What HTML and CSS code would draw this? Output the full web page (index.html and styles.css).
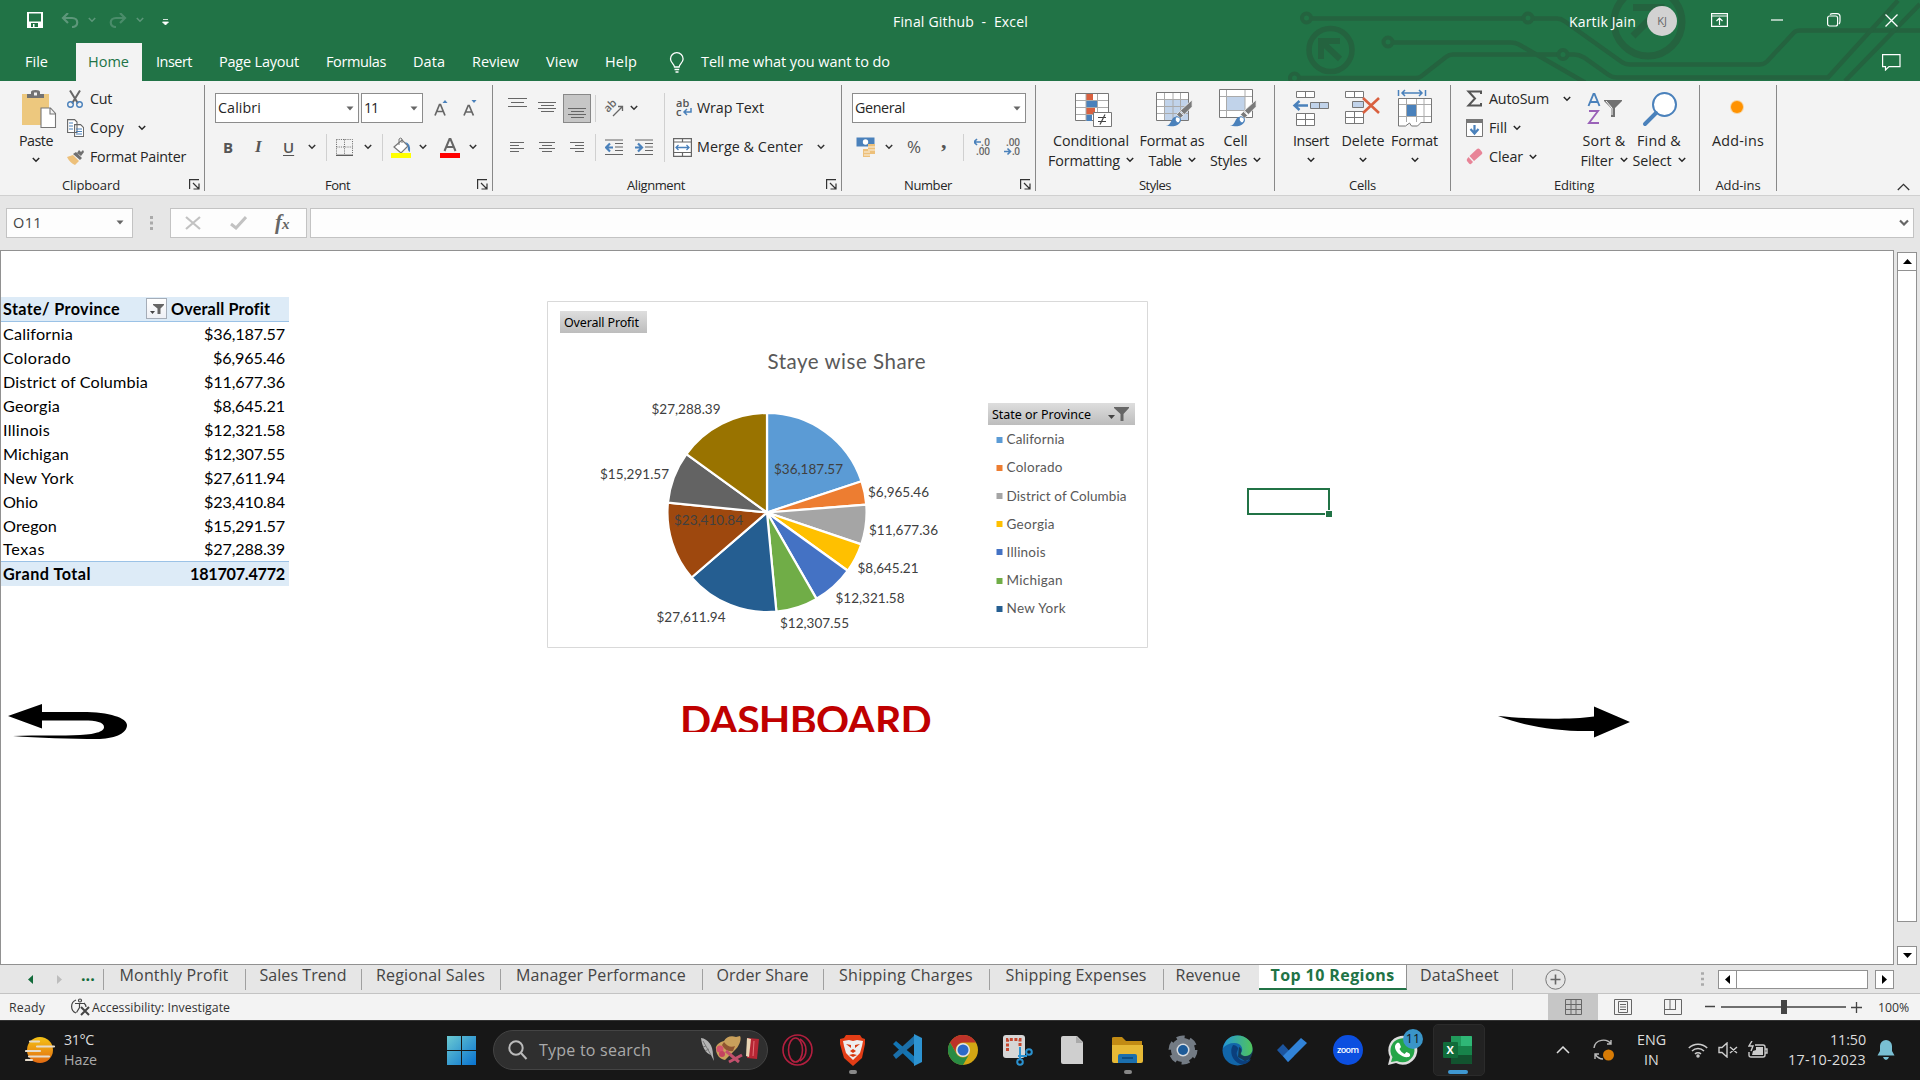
FILE: index.html
```html
<!DOCTYPE html>
<html lang="en">
<head>
<meta charset="utf-8">
<title>Final Github - Excel</title>
<link rel="stylesheet" href="styles.css">
</head>
<body>
<svg class="defs" width="0" height="0">
  <symbol id="chev" viewBox="0 0 8 6"><path d="M.8 1 4 4.2 7.2 1" fill="none" stroke="currentColor" stroke-width="1.5"/></symbol>
  <symbol id="drop" viewBox="0 0 8 5"><path d="M.5.5h7L4 4.5z" fill="#666"/></symbol>
  <symbol id="launch" viewBox="0 0 11 11"><path d="M.6 10V.6H10M4 4l5.5 5.5M10 4.5V10H4.5" fill="none" stroke="#333" stroke-width="1.2"/></symbol>
  <symbol id="brush" viewBox="0 0 30 30"><path d="M28 1v7l-8 8-4-4zM15 13l4 4-3 3-4-4z" fill="#7a7a7a" stroke="#f3f3f3" stroke-width=".8"/><path d="M1 28c6-1 5-10 11-10 4 0 6 4 3 7-3 4-9 3-14 3z" fill="#4a81bb"/><path d="M12 18.500c3 0 5 2 3 5-1 2-3 1-4-1s0-4 1-4z" fill="#fff" stroke="#4a81bb"/></symbol>
  <symbol id="funnel" viewBox="0 0 22 16"><path d="M6 1h15v1l-5.500 6v7h-3V8L6 2z" fill="#666"/><path d="M0 9h7l-3.500 4z" fill="#444"/></symbol>
  <symbol id="funnel-cell" viewBox="0 0 14 12"><path d="M3 1h11v1L10.500 5.500V11h-3V5.500L3 2z" fill="#666"/><path d="M0 8h5l-2.500 3z" fill="#444"/></symbol>
</svg>

<div class="top">
  <svg class="circuit" width="640" height="81" viewBox="1280 0 640 81" fill="none" stroke="#24633f" stroke-width="4.500">
    <circle cx="1306.500" cy="18" r="4.500" stroke-width="4"/><path d="M1311 18.500h212M1533 18.500h24q4 0 8 3l56 40q4 3 9 3h129q5 0 8-3l27-29q2-2 6-2h128"/>
    <circle cx="1528" cy="18" r="4.500" stroke-width="4"/><circle cx="1330.500" cy="50" r="21.500" stroke-width="5.500"/>
    <path d="M1340 41h-19v18M1322 42l18 17" stroke-width="6"/>
    <circle cx="1388" cy="42" r="4.500" stroke-width="4"/><path d="M1393 42.500h118q4 0 8 2l66 38M1299 78h117q4 0 7-3l23-18q3-2.500 7-2.500h106"/>
    <circle cx="1563" cy="54.500" r="4.500" stroke-width="4"/><circle cx="1294.500" cy="78" r="4.500" stroke-width="4"/>
    <path d="M1568 54.500h6q5 0 10 3l24 17q4 3 9 3h211l70-77M1845 81l75-77"/>
    <circle cx="1648" cy="22" r="34" stroke-width="7"/><path d="M1633 7.500h28v14M1660 9l-27 27" stroke-width="7"/>
  </svg>
  <header class="titlebar">
    <svg width="16" height="16" viewBox="0 0 16 16"><path d="M0 0h16v16H0zM2 1.500v8h12v-8zM4 11v4h2v-3h1.500v3H11v-4z" fill="#fff" fill-rule="evenodd"/></svg>
    <svg width="18" height="15" viewBox="0 0 18 15" fill="none" stroke="#5d977a" stroke-width="2.200"><path d="M7 0 2 5l5 5M2 5h9c7 0 7 9 0 9"/></svg>
    <svg class="dim" width="8" height="6"><use href="#chev"/></svg>
    <svg width="18" height="15" viewBox="0 0 18 15" fill="none" stroke="#4a8c6a" stroke-width="2.200"><path d="m11 0 5 5-5 5M16 5H7c-7 0-7 9 0 9"/></svg>
    <svg class="dim" width="8" height="6"><use href="#chev"/></svg>
    <svg class="qat" width="7" height="7" viewBox="0 0 7 7"><path d="M1 .5h5M.5 3h6L3.500 6z" stroke="#fff" fill="#fff" stroke-width=".8"/></svg>
    <span><span data-w="135">Final Github&nbsp; -&nbsp; Excel</span></span>
    <span><span data-w="67">Kartik Jain</span></span>
    <span class="avatar">KJ</span>
    <svg width="17" height="14" viewBox="0 0 17 14" fill="none" stroke="#fff" stroke-width="1.200"><path d="M.6.6h15.800v12.800H.6zM.6 3h15.800M8.500 12V5M5.500 8l3-3 3 3"/></svg>
    <svg width="12" height="2"><path d="M0 1h12" stroke="#fff" stroke-width="1.200"/></svg>
    <svg width="14" height="14" viewBox="0 0 14 14" fill="none" stroke="#fff" stroke-width="1.200"><rect x=".6" y="3" width="10" height="10" rx="2"/><path d="M3 1.500Q4 .6 6 .6h4q3 0 3 3V8q0 2-1 3"/></svg>
    <svg width="13" height="13" viewBox="0 0 13 13"><path d="m.5.500 12 12m0-12-12 12" stroke="#fff" stroke-width="1.300"/></svg>
  </header>
  <nav class="tabs">
    <span><span data-w="23">File</span></span><span class="on"><span data-w="41">Home</span></span><span><span data-w="36">Insert</span></span><span><span data-w="80">Page Layout</span></span><span><span data-w="60">Formulas</span></span><span><span data-w="32">Data</span></span><span><span data-w="47">Review</span></span><span><span data-w="32">View</span></span><span><span data-w="32">Help</span></span>
    <svg width="16" height="21" viewBox="0 0 16 21" fill="none" stroke="#fff" stroke-width="1.300"><path d="M5.500 15c0-3-4-4-4-8a6.300 6.300 0 0 1 12.600 0c0 4-4 5-4 8zM5.500 17.500h4.700M6.500 20h3"/></svg>
    <span><span data-w="189">Tell me what you want to do</span></span>
    <svg width="19" height="17" viewBox="0 0 19 17" fill="none" stroke="#fff" stroke-width="1.200"><path d="M.6.600h17.400v12H7L3.500 16v-3.400H.6z"/></svg>
  </nav>
</div>

<div class="ribbon">
  <section class="group clip">
    <div class="body">
      <div class="big">
        <svg width="36" height="40" viewBox="21 89 36 40"><path d="M22 94h27v31H22z" fill="#edc87e"/><path d="M27 98v-4h4v-2q0-2 4.500-2t4.500 2v2h4v4z" fill="#737373"/><path d="M34 92.500h3v3h-3z" fill="#f3f3f3"/><path d="M41 108h9.500l5 5.500v14H41zM50 108v6h5.500" fill="#fff" stroke="#777" stroke-width="1.100"/></svg>
        <span data-w="34">Paste</span><svg class="cv" width="8" height="6"><use href="#chev"/></svg>
      </div>
      <div class="cmds">
        <div><svg width="17" height="18" viewBox="67 89 17 18" fill="none"><path d="m70 89.500 8 13M80 89.500l-8 13" stroke="#666" stroke-width="2"/><circle cx="70.500" cy="103.500" r="2.800" stroke="#4a81bb" stroke-width="1.400"/><circle cx="79.500" cy="103.500" r="2.800" stroke="#4a81bb" stroke-width="1.400"/></svg><span data-w="22">Cut</span></div>
        <div><svg width="17" height="18" viewBox="67 118 17 18"><path d="M67.600 118.600h7l2.400 2.400v10.500h-9.400zM74.600 123.600h6l3 3v8.900h-9z" fill="#fff" stroke="#666" stroke-width="1.100"/><path d="M69 122h4m-4 3h4m-4 3h4m3 0h6m-6 2.500h6m-6 2.500h6" stroke="#4a81bb"/></svg><span data-w="34">Copy</span><svg class="gap14" width="8" height="6"><use href="#chev"/></svg></div>
        <div><svg width="17" height="16" viewBox="67 148 17 16"><path d="m67 156 6-2 6 6-4 4q-5-2-8-8z" fill="#edc07a"/><path d="m73 153 3-2 6 6-2 2zM77 152l2-3 2 2 2-2 1 2-3 4z" fill="#707070"/></svg><span data-w="96">Format Painter</span></div>
      </div>
    </div>
    <footer><span data-w="58">Clipboard</span><svg width="11" height="11"><use href="#launch"/></svg></footer>
  </section>

  <section class="group font">
    <div class="body two">
      <div class="r1"><div class="combo"><span data-w="43">Calibri</span><svg width="8" height="5"><use href="#drop"/></svg></div><div class="combo"><span data-w="14">11</span><svg width="8" height="5"><use href="#drop"/></svg></div>
        <svg width="15" height="17" viewBox="0 0 15 17"><path d="m1 15.500 4.500-11h1l4.500 11M2.700 11.500h6.600" fill="none" stroke="#666" stroke-width="1.700"/><path d="M8.500 3 11 0l2.500 3z" fill="#4a81bb"/></svg>
        <svg width="15" height="17" viewBox="0 0 15 17"><path d="m1 15.500 4.200-10h1l4.200 10M2.700 12h6.200" fill="none" stroke="#666" stroke-width="1.700"/><path d="M8.500 0h5L11 3z" fill="#4a81bb"/></svg></div>
      <div class="r2"><b>B</b><i>I</i><u>U</u><svg width="8" height="6"><use href="#chev"/></svg><hr>
        <svg width="17" height="17" viewBox="0 0 17 17"><path d="M.5.500h16v15M.5.500v15M8.500.500v15M.5 8h16" fill="none" stroke="#666" stroke-dasharray="1 1.200"/><path d="M0 16.300h17" stroke="#555" stroke-width="1.300"/></svg><svg width="8" height="6"><use href="#chev"/></svg><hr>
        <svg width="20" height="21" viewBox="391 136 20 21"><path d="m394 146 8-7 6 6-7 7z" fill="#fff" stroke="#777" stroke-width="1.200"/><path d="M399 144v-6q2-2 3 0v4" fill="none" stroke="#777"/><path d="M405 141q6 1 5 10-3-1-2-6z" fill="#4a81bb"/><path d="M391 152h20v5h-20z" fill="#ff0"/></svg><svg width="8" height="6"><use href="#chev"/></svg>
        <svg width="20" height="21" viewBox="440 136 20 21"><path d="m444.500 150 5-12h1l5 12M446.500 146h7" fill="none" stroke="#666" stroke-width="2"/><path d="M440 152h20v5h-20z" fill="red"/></svg><svg width="8" height="6"><use href="#chev"/></svg></div>
    </div>
    <footer><span data-w="25">Font</span><svg width="11" height="11"><use href="#launch"/></svg></footer>
  </section>

  <section class="group align">
    <div class="body">
      <div class="alignl two">
        <div class="r1">
          <svg width="19" height="24" viewBox="0 0 19 24"><path d="M0 2.500h19M3 6.500h13M0 10.500h19" stroke="#666" stroke-width="1.200"/></svg>
          <svg width="19" height="24" viewBox="0 0 19 24"><path d="M0 6.500h18M3 9.500h13M0 12.500h18M3 15.500h13" stroke="#666" stroke-width="1.200"/></svg>
          <span class="sel"><svg width="19" height="28" viewBox="0 0 19 28"><path d="M0 13.500h18M3 16.500h13M0 19.500h18M3 22.500h13" stroke="#666" stroke-width="1.200"/></svg></span><hr>
          <svg class="orient" width="20" height="18" viewBox="0 0 20 18"><text class="ab" transform="translate(4 14) rotate(-45)">ab</text><path d="M9 17 18 8m-4-.500h4.500V12" fill="none" stroke="#666" stroke-width="1.300"/></svg><svg width="8" height="6"><use href="#chev"/></svg>
        </div>
        <div class="r3">
          <svg width="16" height="12" viewBox="0 0 16 12"><path d="M1 1.500h14M1 4.500h9M1 7.500h14M1 10.500h9" stroke="#666" stroke-width="1.100"/></svg>
          <svg width="16" height="12" viewBox="0 0 16 12"><path d="M0 1.500h16M3 4.500h10M0 7.500h16M3 10.500h10" stroke="#666" stroke-width="1.100"/></svg>
          <svg width="16" height="12" viewBox="0 0 16 12"><path d="M1 1.500h14M6 4.500h9M1 7.500h14M6 10.500h9" stroke="#666" stroke-width="1.100"/></svg><hr>
          <svg width="18" height="17" viewBox="0 0 18 17"><path d="M0 1h18M10 4.500h8M10 8h8M10 11.500h8M0 15.500h18" stroke="#666" stroke-width="1.100"/><path d="M1 8.500h7M5 4.500l-4 4 4 4" fill="none" stroke="#4a81bb" stroke-width="2.200"/></svg>
          <svg width="18" height="17" viewBox="0 0 18 17"><path d="M0 1h18M10 4.500h8M10 8h8M10 11.500h8M0 15.500h18" stroke="#666" stroke-width="1.100"/><path d="M0 8.500h7M3 4.500l4 4-4 4" fill="none" stroke="#4a81bb" stroke-width="2.200"/></svg>
        </div>
      </div>
      <div class="alignr two">
        <div class="rw"><svg width="16" height="20" viewBox="0 0 16 20"><text class="ic" x="0" y="9">ab</text><text class="ic" x="0" y="18">c</text><path d="M15 10v4H8m3-3-3 3 3 3" fill="none" stroke="#4a81bb" stroke-width="1.500"/></svg><span data-w="67">Wrap Text</span></div>
        <div class="rm"><svg width="19" height="19" viewBox="0 0 19 19"><path d="M.6.600h17.800v17.800H.6zM.6 4h17.800M.6 14.500h17.800M9.500.600V4M9.500 14.500v4" fill="#fff" stroke="#666" stroke-width="1.200"/><path d="M3 9.500h13M5.500 7 3 9.500 5.500 12M13.500 7 16 9.500 13.500 12" fill="none" stroke="#4a81bb" stroke-width="1.300"/></svg><span data-w="106">Merge &amp; Center</span><svg class="gap14" width="8" height="6"><use href="#chev"/></svg></div>
      </div>
    </div>
    <footer><span data-w="58">Alignment</span><svg width="11" height="11"><use href="#launch"/></svg></footer>
  </section>

  <section class="group number">
    <div class="body two">
      <div class="r1"><div class="combo"><span data-w="50">General</span><svg width="8" height="5"><use href="#drop"/></svg></div></div>
      <div class="r2">
        <svg width="20" height="20" viewBox="856 138 20 20"><path d="M856.500 138.500h18v9h-18z" fill="#4a81bb"/><circle cx="865.500" cy="143" r="2.700" fill="#fff"/><path d="M868 145h7v10h-5v3h-7v-8h5z" fill="#edc07a"/><path d="M868 148h7m-7 3h7m-11 2h6m-6 3h6" stroke="#fff" stroke-width=".8"/></svg><svg width="8" height="6"><use href="#chev"/></svg>
        <span class="pct">%</span><span class="comma">,</span><hr>
        <svg width="17" height="20" viewBox="0 0 17 20"><text class="dec" x="7" y="9" textLength="9">.0</text><text class="dec" x="2" y="18" textLength="14">.00</text><path d="M0 5h7M3 2l-3 3 3 3" fill="none" stroke="#4a81bb" stroke-width="1.600"/></svg>
        <svg width="17" height="20" viewBox="0 0 17 20"><text class="dec" x="2" y="9" textLength="14">.00</text><text class="dec" x="8" y="18" textLength="8">.0</text><path d="M0 14.500h6M3.500 11.500l3 3-3 3" fill="none" stroke="#4a81bb" stroke-width="1.600"/></svg>
      </div>
    </div>
    <footer><span data-w="48">Number</span><svg width="11" height="11"><use href="#launch"/></svg></footer>
  </section>

  <section class="group styles">
    <div class="body">
      <div class="big"><svg width="40" height="40" viewBox="1074 90 40 40"><path d="M1075.500 94.500h33v27h-33z" fill="#fff" stroke="#777"/><path d="M1086 95h7v6.500h-7zM1086 109h9v6.500h-9z" fill="#d9603f"/><path d="M1086 102h11v6.500h-11zM1086 116h6v6h-6z" fill="#4a81bb"/><path d="M1086 95v27M1097.500 95v27M1076 101.500h32M1076 108.500h32M1076 115.500h32" stroke="#aaa"/><path d="M1093.500 113.500h18v14h-18z" fill="#fff" stroke="#777"/><path d="M1098 118.500h8M1098 122.500h8M1105 115.500l-5 10" stroke="#444" stroke-width="1.200"/></svg><span data-w="76">Conditional</span><div class="ln"><span data-w="72">Formatting</span><svg width="8" height="6"><use href="#chev"/></svg></div></div>
      <div class="big"><svg width="40" height="40" viewBox="1155 90 40 40"><path d="M1156.500 93.500h32v28h-32z" fill="#fff" stroke="#777"/><path d="M1165 100h23v21h-23z" fill="#c1d3ea"/><path d="M1164.500 94v27M1173 94v27M1180.500 94v27M1157 100.500h31M1157 107.500h31M1157 114.500h31" stroke="#aaa"/><use href="#brush" x="1165" y="100" width="29" height="29"/></svg><span data-w="65">Format as</span><div class="ln"><span data-w="33">Table</span><svg width="8" height="6"><use href="#chev"/></svg></div></div>
      <div class="big"><svg width="40" height="40" viewBox="1217 90 40 40"><path d="M1218.500 90.500h33v28h-33z" fill="#fff" stroke="#777"/><path d="M1226 97h18v14h-18z" fill="#c1d3ea"/><path d="M1225.500 91v27M1244 91v27M1219 97.500h32M1219 111.500h32" stroke="#aaa"/><use href="#brush" x="1228" y="100" width="29" height="29"/></svg><span data-w="24">Cell</span><div class="ln"><span data-w="37">Styles</span><svg width="8" height="6"><use href="#chev"/></svg></div></div>
    </div>
    <footer><span data-w="32">Styles</span></footer>
  </section>

  <section class="group cells">
    <div class="body">
      <div class="big"><svg width="38" height="40" viewBox="1291 89 38 40"><path d="M1295.500 91.500h18v6h-18zM1304.500 91.500v6M1295.500 113.500h18v12h-18zM1304.500 113.500v12M1295.500 119.500h18" fill="#fff" stroke="#777"/><path d="M1309.500 102.500h18v6h-18zM1318.500 102.500v6" fill="#c1d3ea" stroke="#777"/><path d="M1294 105.500h13M1298.500 101l-5 4.500 5 4.500" fill="none" stroke="#4a81bb" stroke-width="2.400"/></svg><span data-w="36">Insert</span><svg class="cv" width="8" height="6"><use href="#chev"/></svg></div>
      <div class="big"><svg width="38" height="40" viewBox="1346 89 38 40"><path d="M1347.500 91.500h18v6h-18zM1356.500 91.500v6M1347.500 111.500h18v12h-18zM1356.500 111.500v12M1347.500 117.500h18" fill="#fff" stroke="#777"/><path d="M1354.500 101.500h11v6h-11z" fill="#c1d3ea" stroke="#777"/><path d="m1365 98 16 15M1381 98l-16 15" fill="none" stroke="#d9603f" stroke-width="2.600"/></svg><span data-w="43">Delete</span><svg class="cv" width="8" height="6"><use href="#chev"/></svg></div>
      <div class="big"><svg width="38" height="40" viewBox="1396 89 38 40"><path d="M1398.500 98.500h33v24h-33z" fill="#fff" stroke="#777"/><path d="M1406.500 99v23M1416.500 99v23M1424 99v23M1399 104.500h32M1399 116.500h32" stroke="#aaa"/><path d="M1407 105h9v11h-9z" fill="#4a81bb"/><path d="M1398.500 122v4h7l4-3 2 3h6l4-4" fill="#fff" stroke="#777"/><path d="M1398.500 90v6M1425.500 90v6M1402 93h20M1405 90l-3 3 3 3M1419 90l3 3-3 3" fill="none" stroke="#4a81bb" stroke-width="1.500"/></svg><span data-w="47">Format</span><svg class="cv" width="8" height="6"><use href="#chev"/></svg></div>
    </div>
    <footer><span data-w="27">Cells</span></footer>
  </section>

  <section class="group edit">
    <div class="body">
      <div class="cmds">
        <div><svg width="17" height="17" viewBox="0 0 17 17"><path d="M15 4V1.500H2.500l6.500 7-6.500 7H15V13" fill="none" stroke="#555" stroke-width="2"/></svg><span data-w="60">AutoSum</span><svg class="gap14" width="8" height="6"><use href="#chev"/></svg></div>
        <div><svg width="17" height="18" viewBox="0 0 17 18"><path d="M.5 1.500h16v16H.5z" fill="#fff" stroke="#777"/><path d="M0 0h17v4H0z" fill="#777"/><path d="M8.500 6v8M4.500 10l4 4.500 4-4.500" fill="none" stroke="#4a81bb" stroke-width="2.200"/></svg><span data-w="18">Fill</span><svg width="8" height="6"><use href="#chev"/></svg></div>
        <div><svg width="17" height="17" viewBox="0 0 17 17"><path d="M11 1q1.500-1 3 .5L16 4q1 1-.5 2.500L8 13 3.500 8z" fill="#e88497"/><path d="m2.500 9 4.500 5-2 2q-1 .5-2-.5L1 13q-.5-1 0-2z" fill="#e88497"/></svg><span data-w="34">Clear</span><svg width="8" height="6"><use href="#chev"/></svg></div>
      </div>
      <div class="big"><svg width="36" height="40" viewBox="1587 88 36 40" fill="none"><path d="m1588.500 105 5-12h1l5 12M1590.500 101h7" stroke="#4a81bb" stroke-width="1.900"/><path d="M1589 110h9l-9 12h10" stroke="#9a62b8" stroke-width="1.900"/><path d="M1604 99h18v1l-7 7v9h-4v-9l-7-7z" fill="#707070"/><path d="m1606 100 6 7v7" stroke="#fff"/></svg><span data-w="43">Sort &amp;</span><div class="ln"><span data-w="33">Filter</span><svg width="8" height="6"><use href="#chev"/></svg></div></div>
      <div class="big"><svg width="36" height="40" viewBox="1642 88 36 40"><circle cx="1664.500" cy="103.500" r="11.500" fill="#fff" stroke="#4a81bb" stroke-width="2"/><path d="m1656 112-11 11" stroke="#4a81bb" stroke-width="4" stroke-linecap="round"/></svg><span data-w="44">Find &amp;</span><div class="ln"><span data-w="39">Select</span><svg width="8" height="6"><use href="#chev"/></svg></div></div>
    </div>
    <footer><span data-w="40">Editing</span></footer>
  </section>

  <section class="group addins">
    <div class="body"><div class="big"><svg width="16" height="40" viewBox="0 0 16 40"><circle cx="7" cy="18" r="7" fill="#ff9800" opacity=".35"/><circle cx="7" cy="18" r="6" fill="#ff9200"/></svg><span data-w="52">Add-ins</span></div></div>
    <footer><span data-w="45">Add-ins</span></footer>
  </section>
  <svg class="collapse" width="13" height="8" viewBox="0 0 13 8"><path d="m.8 7 5.700-5.700L12.200 7" fill="none" stroke="#333" stroke-width="1.300"/></svg>
</div>

<div class="formula">
  <div class="box name"><span data-w="29">O11</span><svg width="8" height="5"><use href="#drop"/></svg></div>
  <svg class="dots" width="3" height="14"><path d="M0 1.500h3M0 7h3M0 12.500h3" stroke="#aaa" stroke-width="3"/></svg>
  <div class="box fx"><svg width="16" height="14" viewBox="0 0 16 14"><path d="m1 1 14 12M15 1 1 13" stroke="#c2c2c2" stroke-width="2.200"/></svg><svg width="17" height="14" viewBox="0 0 17 14"><path d="m1 8 5 4L16 1" fill="none" stroke="#c2c2c2" stroke-width="3"/></svg><span><i>f</i>x</span></div>
  <div class="box input"><svg width="10" height="7" viewBox="0 0 10 7"><path d="m1 1.500 4 4 4-4" fill="none" stroke="#666" stroke-width="2.200"/></svg></div>
</div>

<main class="work">
  <div class="sheet">
    <table class="pivot">
      <tr><th><span data-w="117">State/ Province</span><span class="filter"><svg width="14" height="12"><use href="#funnel-cell"/></svg></span></th><th><span data-w="99">Overall Profit</span></th></tr>
      <tr><td><span data-w="70">California</span></td><td><span data-w="81">$36,187.57</span></td></tr>
      <tr><td><span data-w="68">Colorado</span></td><td><span data-w="72">$6,965.46</span></td></tr>
      <tr><td><span data-w="145">District of Columbia</span></td><td><span data-w="81">$11,677.36</span></td></tr>
      <tr><td><span data-w="57">Georgia</span></td><td><span data-w="72">$8,645.21</span></td></tr>
      <tr><td><span data-w="47">Illinois</span></td><td><span data-w="81">$12,321.58</span></td></tr>
      <tr><td><span data-w="66">Michigan</span></td><td><span data-w="81">$12,307.55</span></td></tr>
      <tr><td><span data-w="71">New York</span></td><td><span data-w="81">$27,611.94</span></td></tr>
      <tr><td><span data-w="35">Ohio</span></td><td><span data-w="81">$23,410.84</span></td></tr>
      <tr><td><span data-w="54">Oregon</span></td><td><span data-w="81">$15,291.57</span></td></tr>
      <tr><td><span data-w="42">Texas</span></td><td><span data-w="81">$27,288.39</span></td></tr>
      <tr class="total"><td><span data-w="88">Grand Total</span></td><td><span data-w="95">181707.4772</span></td></tr>
    </table>
    <svg class="chart" width="602" height="348" viewBox="547 301 602 348">
      <defs><linearGradient id="btn" x2="0" y2="1"><stop offset="0" stop-color="#dedede"/><stop offset="1" stop-color="#bdbdbd"/></linearGradient></defs>
      <path d="M547.500 301.500h600v346h-600z" fill="#fff" stroke="#d9d9d9"/>
      <rect x="560" y="311" width="87" height="22" fill="url(#btn)"/><rect x="988" y="403" width="147" height="22" fill="url(#btn)"/>
      <text class="btn" x="564" y="327" textLength="75">Overall Profit</text><text class="btn" x="992" y="419" textLength="99">State or Province</text>
      <use href="#funnel" x="1108" y="406" width="22" height="16"/>
      <text class="title" x="767.500" y="369" textLength="158">Staye wise Share</text>
      <g stroke="#fff" stroke-width="2.200" stroke-linejoin="round" transform="translate(767 512.500) scale(1.011) translate(-767 -513)">
        <path fill="#5b9bd5" d="M767 513V414.500A98.500 98.500 0 0 1 860.500 482.100z"/>
        <path fill="#ed7d31" d="M767 513 860.500 482.100A98.500 98.500 0 0 1 865.200 505.300z"/>
        <path fill="#a5a5a5" d="M767 513 865.200 505.300A98.500 98.500 0 0 1 860.300 544.500z"/>
        <path fill="#ffc000" d="M767 513 860.300 544.500A98.500 98.500 0 0 1 846.900 570.600z"/>
        <path fill="#4472c4" d="M767 513 846.900 570.600A98.500 98.500 0 0 1 816 598.400z"/>
        <path fill="#70ad47" d="M767 513 816 598.400A98.500 98.500 0 0 1 776.300 611.100z"/>
        <path fill="#255e91" d="M767 513 776.300 611.100A98.500 98.500 0 0 1 692.400 577.300z"/>
        <path fill="#9e480e" d="M767 513 692.400 577.300A98.500 98.500 0 0 1 669 503.300z"/>
        <path fill="#636363" d="M767 513 669 503.300A98.500 98.500 0 0 1 687.300 455.200z"/>
        <path fill="#997300" d="M767 513 687.300 455.200A98.500 98.500 0 0 1 767 414.500z"/>
      </g>
      <g class="vals">
        <text x="651.500" y="414" textLength="69">$27,288.39</text><text x="600" y="479" textLength="69">$15,291.57</text><text x="674" y="525" textLength="69">$23,410.84</text><text x="774" y="474" textLength="69">$36,187.57</text><text x="868" y="497" textLength="61">$6,965.46</text><text x="869" y="535" textLength="69">$11,677.36</text><text x="857.500" y="573" textLength="61">$8,645.21</text><text x="835.500" y="603" textLength="69">$12,321.58</text><text x="780" y="628" textLength="69">$12,307.55</text><text x="656.500" y="622" textLength="69">$27,611.94</text>
      </g>
      <g class="legend">
        <path fill="#5b9bd5" d="M996.500 437h6v6h-6z"/><path fill="#ed7d31" d="M996.500 465h6v6h-6z"/><path fill="#a5a5a5" d="M996.500 493h6v6h-6z"/><path fill="#ffc000" d="M996.500 521h6v6h-6z"/><path fill="#4472c4" d="M996.500 549h6v6h-6z"/><path fill="#70ad47" d="M996.500 578h6v6h-6z"/><path fill="#255e91" d="M996.500 606h6v6h-6z"/>
        <text x="1006.500" y="444" textLength="58">California</text><text x="1006.500" y="472" textLength="56">Colorado</text><text x="1006.500" y="501" textLength="120">District of Columbia</text><text x="1006.500" y="529" textLength="48">Georgia</text><text x="1006.500" y="557" textLength="39">Illinois</text><text x="1006.500" y="585" textLength="56">Michigan</text><text x="1006.500" y="613" textLength="59">New York</text>
      </g>
    </svg>
    <div class="dash"><span data-w="251">DASHBOARD</span></div>
    <svg class="back" width="120" height="37" viewBox="8 703 120 37"><path d="m8 716 34-12v8h40c28 0 45 6 45 13 0 9-14 14-30 14-25 0-60-1-84-3 25-1 50 0 67-1 18-1 24-4 24-8 0-5-8-6.500-20-6.500H42v8z"/></svg>
    <svg class="next" width="132" height="32" viewBox="1498 706 132 32"><path d="M1498 716c30 3 70 4 96 .5v-10l36 15.500-36 15.500V731c-35 1-70-5-96-15z"/></svg>
    <div class="cell"></div>
  </div>
  <div class="vbar"><span class="btn-up"><svg width="9" height="5"><path d="M0 5h9L4.500 0z"/></svg></span><span class="thumb"></span><span class="btn-down"><svg width="9" height="5"><path d="M0 0h9L4.500 5z"/></svg></span></div>
</main>

<nav class="sheets">
  <svg width="6" height="9"><path d="M6 0v9L1 4.500z" fill="#136b3b"/></svg><svg width="6" height="9"><path d="M0 0v9l5-4.500z" fill="#bdbdbd"/></svg><span class="more">...</span>
  <span class="tab"><span data-w="109">Monthly Profit</span></span><span class="tab"><span data-w="87">Sales Trend</span></span><span class="tab"><span data-w="109">Regional Sales</span></span><span class="tab"><span data-w="170">Manager Performance</span></span><span class="tab"><span data-w="92">Order Share</span></span><span class="tab"><span data-w="134">Shipping Charges</span></span><span class="tab"><span data-w="141">Shipping Expenses</span></span><span class="tab last"><span data-w="65">Revenue</span></span><span class="tab cur"><span data-w="124">Top 10 Regions</span></span><span class="tab end"><span data-w="79">DataSheet</span></span>
  <svg class="plus" width="21" height="21" viewBox="0 0 21 21" fill="none"><circle cx="10.500" cy="10.500" r="9.700" stroke="#777"/><path d="M10.500 5.500v10M5.500 10.500h10" stroke="#666" stroke-width="1.600"/></svg>
  <svg width="3" height="14"><path d="M0 1.500h3M0 7h3M0 12.500h3" stroke="#aaa" stroke-width="2.500"/></svg>
  <div class="hbar"><span class="hb"><svg width="5" height="9"><path d="M5 0v9L0 4.500z"/></svg></span><span class="hthumb"></span><span class="hb"><svg width="5" height="9"><path d="M0 0v9l5-4.500z"/></svg></span></div>
</nav>

<div class="status">
  <span><span data-w="36">Ready</span></span>
  <svg width="20" height="18" viewBox="0 0 20 18" fill="none" stroke="#444" stroke-width="1.200"><path d="M6 2a7 7 0 0 0 0 13"/><circle cx="10" cy="2.500" r="1.500"/><path d="M5 5.500h9M9.500 5.500v4l-3 5M14 5q2 2 2 4"/><path d="m11 9 8 8m0-8-8 8" stroke-width="2"/></svg>
  <span><span data-w="138">Accessibility: Investigate</span></span>
  <span class="view on"><svg width="17" height="16" viewBox="0 0 17 16"><path d="M.5.500h16v15H.5zM6 .5v15M11 .5v15M.5 5.500h16M.5 10.500h16" fill="none" stroke="#666"/></svg></span>
  <span class="view"><svg width="18" height="16" viewBox="0 0 18 16"><path d="M.5.500h17v15H.5zM4.500 2.500h9v11h-9zM6 5.500h6M6 8h6M6 10.500h6" fill="none" stroke="#666"/></svg></span>
  <span class="view layout"><svg width="18" height="16" viewBox="0 0 18 16"><path d="M.5.500h17v15H.5zM6 .5v10M11.500.500v10M0 10.500h12" fill="none" stroke="#666"/></svg></span>
  <svg width="147" height="16" viewBox="0 0 147 16"><path d="M0 7.500h10M16 8h125" stroke="#444" stroke-width="1.300"/><path d="M76 1h6v14h-6z" fill="#444"/></svg>
  <svg width="11" height="11"><path d="M0 5.500h11M5.500 0v11" stroke="#444" stroke-width="1.300"/></svg>
  <span><span data-w="31">100%</span></span>
</div>

<div class="taskbar">
  <svg width="31" height="28" viewBox="0 0 31 28"><defs><linearGradient id="sun" x2="0" y2="1"><stop stop-color="#f4c315"/><stop offset="1" stop-color="#e26a12"/></linearGradient></defs><circle cx="15" cy="14" r="13" fill="url(#sun)"/><path d="M5 5.500h9M12 10.500h17M1 15h14M4 20.500h20M1 24h6" stroke="#e6dccb" stroke-width="2.200" stroke-linecap="round"/></svg>
  <div class="two-line weather"><span data-w="30">31°C</span><span class="faint" data-w="33">Haze</span></div>
  <svg width="29" height="29" viewBox="0 0 29 29"><defs><linearGradient id="win" x2="1" y2="1"><stop stop-color="#6bcad2"/><stop offset="1" stop-color="#0872d0"/></linearGradient></defs><path d="M0 0h14v14H0zM15 0h14v14H15zM0 15h14v14H0zM15 15h14v14H15z" fill="url(#win)"/></svg>
  <div class="search">
    <svg width="20" height="20" viewBox="0 0 20 20" fill="none" stroke="#bbb" stroke-width="2"><circle cx="8" cy="8" r="6.700"/><path d="m13 13 5.500 6"/></svg><span data-w="112">Type to search</span>
    <svg class="art" width="62" height="30" viewBox="699 1036 62 30"><path d="M701 1039c7 1 12 7 12 17l1 6-3-6c-6-2-9-9-10-17z" fill="#b4b4b4"/><path d="m703 1042 8 14M703 1048l3-1m-1 5 4-2" stroke="#777" fill="none"/><path d="M716 1050c-1-3 3-7 8-8 2-4 7-6 12-4l4-1c2 3-1 11-6 15l-9 9c-5-1-9-5-9-11z" fill="#c9a05b"/><path d="M724 1043c3 4 7 6 11 4l-2 5c-5 1-9-2-11-6z" fill="#8f5531"/><circle cx="720" cy="1050" r="3.500" fill="#d5526c"/><circle cx="722" cy="1055" r="3" fill="#c4425f"/><path d="m726 1052 13 11m-10 0 13-7" stroke="#c2506c" stroke-width="3"/><path d="m748 1039 11 1-2 20-10-1z" fill="#b72634"/><path d="m747 1039 4 1-2 18-3-1z" fill="#e9d6b5"/><path d="m754 1042-1 15" stroke="#e4737a"/></svg>
  </div>
  <div class="apps">
    <span><svg width="31" height="32" viewBox="0 0 31 32" fill="none" stroke="#b31f3f" stroke-width="1.600"><ellipse cx="15.500" cy="16" rx="14.500" ry="15"/><ellipse cx="13.500" cy="16" rx="7" ry="12"/><path d="M18 5c8 5 8 17 0 22"/></svg></span>
    <span class="run"><svg width="26" height="31" viewBox="0 0 26 31"><path d="m6 0h14l2 3 3 1v5l-3 14-9 8-9-8L0 9V4l4-1z" fill="#e33d16"/><path d="m3 6 6-1 4 1 4-1 6 1-1 5-2 7-7 7-7-7-2-7z" fill="#eee"/><path d="m6 9 5 1v3zM20 9l-5 1v3zM10 16l3-2 3 2-3 2zM9 20l4-1 4 1-4 2z" fill="#d8380f"/></svg></span>
    <span><svg width="31" height="32" viewBox="0 0 31 32"><path d="m1 10 3-3 19 16v8z" fill="#1375b4"/><path d="m1 21 3 4L23 9V1z" fill="#1b6fa9"/><path d="m22 0 8 4v24l-8 4z" fill="#2d93d1"/></svg></span>
    <span><svg width="30" height="30" viewBox="0 0 30 30"><circle cx="15" cy="15" r="15" fill="#d3a614"/><path d="M2 7.500A15 15 0 0 1 28 7.500H15a7.500 7.500 0 0 0-6.500 11z" fill="#bd3229"/><path d="M2 7.500A15 15 0 0 0 15 30l6.500-11.300a7.500 7.500 0 0 1-13 0z" fill="#2a8b43"/><circle cx="15" cy="15" r="7" fill="#e5e5e5"/><circle cx="15" cy="15" r="5.500" fill="#2b69c9"/></svg></span>
    <span><svg width="31" height="31" viewBox="0 0 31 31"><rect x="1" width="22" height="23" rx="3" fill="#d6d6d6"/><path d="M5.500 16V4.500H18V11" fill="none" stroke="#c6462d" stroke-width="3" stroke-dasharray="3 1.600"/><path d="M18 12v12M16 21h9" stroke="#2b92d0" stroke-width="2"/><g fill="none" stroke="#2b92d0" stroke-width="2"><circle cx="18" cy="27" r="2.800"/><circle cx="27" cy="17" r="2.800"/></g></svg></span>
    <span><svg width="23" height="28" viewBox="0 0 23 28"><path d="M2 0h14l6 6v22H2q-2 0-2-2V2q0-2 2-2z" fill="#cfcfcf"/><path d="M15 0v7h7z" fill="#aaa"/></svg></span>
    <span class="run"><svg width="31" height="27" viewBox="0 0 31 27"><path d="M0 1q0-1 2-1h8l4 4h16v8H0z" fill="#c28b14"/><path d="M0 8h31v16q0 2-2 2H2q-2 0-2-2z" fill="#e6b936"/><path d="M6 26v-7q0-2 2-2h15q2 0 2 2v7z" fill="#1b6fae"/><path d="M10 21h11" stroke="#0c4f86" stroke-width="2"/></svg></span>
    <span><svg width="30" height="30" viewBox="0 0 30 30"><circle cx="15" cy="15" r="12" fill="#737b84" stroke="#737b84" stroke-width="5" stroke-dasharray="7.500 5.060"/><circle cx="15" cy="15" r="6.500" fill="#d6dbe0"/><circle cx="15" cy="15" r="5" fill="#1d5b98"/></svg></span>
    <span><svg width="31" height="31" viewBox="0 0 31 31"><defs><linearGradient id="edge" x2="1"><stop stop-color="#2497d6"/><stop offset="1" stop-color="#50c45b"/></linearGradient></defs><circle cx="15.500" cy="15.500" r="15" fill="#1266a9"/><path d="M1 13C3 4 9 .5 15.500.500 25 .5 31 8 30.500 14c0 5-4 8-9 7-4-1-3-3-2-4 2-3 0-9-7-9-5 0-9 2-11.500 5z" fill="url(#edge)"/><path d="M11 10c-4 6-1 16 7 19 5 1 9-1 11-5-6 4-13 1-14-4-1-3 1-4 1-7-1-2-3-3-5-3z" fill="#0b3f7c"/><path d="M17 12c4 2 2 5 2 7 2 3 9 3 11-2l1 6-8 3-7-4z" fill="#171717" opacity=".55"/></svg></span>
    <span><svg width="31" height="26" viewBox="0 0 31 26"><path d="m0 13 6-6 11 12-6 6z" fill="#1c559f"/><path d="m11 25-5-6L24 1l6 5z" fill="#3183d8"/></svg></span>
    <span><svg width="30" height="30" viewBox="0 0 30 30"><circle cx="15" cy="15" r="15" fill="#0c4fe0"/><text class="zm" x="4" y="18" textLength="22">zoom</text></svg></span>
    <span class="wa"><svg width="31" height="31" viewBox="0 0 31 31"><path d="M1 30 3 22A14.500 14.500 0 1 1 9 28z" fill="#dedede"/><path d="m4 27 1.500-5A12 12 0 1 1 10 26z" fill="#25a548"/><path d="M10 8c3-1 3 2 4 4l-1.500 2c1 2 3 4 5 5l2-2c2 1 4 1 3.500 4-4 4-16-3-15-10 .2-1 1-2 2-3z" fill="#fff"/></svg><em>11</em></span>
    <span class="xl"><svg width="30" height="28" viewBox="0 0 30 28"><path d="M8 0h20q1 0 1 1v26q0 1-1 1H8z" fill="#17834a"/><path d="M18 0h10q1 0 1 1v9H18z" fill="#2fb776"/><path d="M8 0h10v10H8z" fill="#219a5b"/><path d="M8 19h21v8q0 1-1 1H8z" fill="#12532f"/><rect y="6" width="15" height="16" rx="1" fill="#116c3a"/><text class="x" x="3.500" y="18">X</text></svg></span>
  </div>
  <svg width="14" height="8" viewBox="0 0 14 8"><path d="m1 7 6-6 6 6" fill="none" stroke="#ddd" stroke-width="1.500"/></svg>
  <svg width="22" height="22" viewBox="0 0 22 22"><path d="M1 9c1-9 13-10 17-4m0-4v4h-4M10 20c-4 0-6-2-8-5m0 5v-5h4" fill="none" stroke="#bbb" stroke-width="1.400"/><circle cx="15.500" cy="16" r="5.500" fill="#d77b05"/></svg>
  <div class="two-line mid"><span data-w="29">ENG</span><span data-w="15">IN</span></div>
  <svg width="20" height="16" viewBox="0 0 20 16" fill="none" stroke="#ccc" stroke-width="1.500"><path d="M.8 6a13 13 0 0 1 18.400 0M4 9a8.500 8.500 0 0 1 12 0M7 12a4.200 4.200 0 0 1 6 0"/><circle cx="10" cy="14" r="1"/></svg>
  <svg width="20" height="16" viewBox="0 0 20 16" fill="none" stroke="#ccc" stroke-width="1.400"><path d="M1 5.500h3L9 1v14l-5-4.500H1zM12 5l7 6m0-6-7 6"/></svg>
  <svg width="20" height="18" viewBox="0 0 20 18" fill="none" stroke="#ccc" stroke-width="1.400"><path d="M7 4h8q2 0 2 2v8q0 2-2 2H3q-2 0-2-2v-3M17 8h2v4h-2"/><path d="M8 6h7v8H4l1-4 3-1z" fill="#ccc" stroke="none"/><path d="M4 0 1 5h4L3 10"/></svg>
  <div class="two-line clock"><span data-w="36">11:50</span><span data-w="78">17-10-2023</span></div>
  <svg width="18" height="20" viewBox="0 0 18 20"><path d="M9 0a6 6 0 0 1 6 6v5l2.500 4.500H.5L3 11V6a6 6 0 0 1 6-6zM6 17h6q-1 3-3 3t-3-3z" fill="#79bfd3"/></svg>
</div>
<script src="fit.js"></script>
</body>
</html>
```
FILE: styles.css
```css
* { box-sizing: border-box; }
body { margin: 0; width: 1920px; height: 1080px; overflow: hidden; display: flex; flex-direction: column; background: #e6e6e6; color: #262626; font: 14.3px/20px "Open Sans", "Noto Sans", sans-serif; }
svg { display: block; flex: none; }
.defs { position: absolute; }
[data-w] { display: inline-block; flex: none; width: max-content; white-space: nowrap; }
hr { width: 1px; height: 27px; margin: 0; border: 0; background: #d0d0d0; }

/* Title bar and ribbon tabs */
.top { position: relative; height: 81px; background: #217346; color: #fff; }
.circuit { position: absolute; right: 0; top: 0; }
.titlebar, .tabs { position: relative; display: grid; align-items: center; }
.titlebar { height: 43px; padding: 0 0 3px 27px; grid-template-columns: 34px 27px 21px 27px 26px 731px 676px 78px 64px 60px 56px 58px 1fr; font-size: 14px; }
.titlebar > span { padding-top: 3px; }
.titlebar .dim { color: #5d977a; }
.titlebar .qat { margin-top: 4px; }
.titlebar .avatar { width: 30px; height: 30px; margin-top: 2px; padding: 0; border-radius: 50%; background: #d2d2d2; color: #666; font-size: 11px; line-height: 30px; text-align: center; }
.tabs { height: 38px; padding-left: 25px; grid-template-columns: 51px 80px 63px 107px 87px 59px 74px 59px 64px 32px 1181px 1fr; font-size: 14.5px; }
.tabs .on { width: 66px; height: 38px; padding-left: 12px; line-height: 38px; background: #f3f3f3; color: #217346; }

/* Ribbon */
.ribbon { display: flex; height: 115px; background: #f3f3f3; border-bottom: 1px solid #d0d0d0; }
.group { display: flex; flex-direction: column; height: 114px; border-right: 1px solid; border-image: linear-gradient(transparent 5px, #888 5px, #888 109px, transparent 109px) 1; }
.clip { width: 205px; } .font { width: 288px; } .align { width: 349px; } .number { width: 194px; }
.styles { width: 239px; } .cells { width: 176px; } .edit { width: 249px; } .addins { width: 77px; }
.body { height: 93px; }
.group footer { display: grid; grid-template-columns: 1fr; align-items: center; height: 21px; font-size: 13px; line-height: 20px; }
.group footer span { justify-self: center; }
.group footer:has(svg) { grid-template-columns: 1fr 15px; }
.clip footer span { margin-right: 7px; }
.font footer span { margin-right: 7px; }
.align footer span { margin-right: 7px; }
.number footer span { margin-right: 6px; }
.edit footer span { margin-right: 2px; }
.big { display: flex; flex-direction: column; align-items: center; padding-top: 8px; }
.big > span { margin-top: 2px; }
.big .cv { margin-top: 6px; }
.ln { display: flex; align-items: center; gap: 6px; }
.ln svg { margin-top: -2px; }
.clip .body { display: grid; grid-template-columns: 67px 1fr; }
.clip .big { padding: 8px 0 0 5px; }
.clip .big > svg:first-child { margin-left: 6px; }
.cmds { padding-top: 3px; }
.cmds > div { display: flex; align-items: center; gap: 6px; height: 29px; }
.gap14 { margin-left: 8px; }
.two { display: grid; grid-template-rows: 30px 30px; align-content: start; row-gap: 9px; padding-top: 12px; }
.two > div { display: grid; align-items: center; height: 30px; }
.font .r1 { grid-template-columns: 146px 73px 29px 15px; padding-left: 10px; }
.combo { display: flex; justify-content: space-between; align-items: center; height: 30px; padding: 0 4px 0 2px; border: 1px solid #8c8c8c; background: #fff; }
.font .combo:first-child { width: 144px; }
.font .combo:nth-child(2) { width: 62px; }
.font .r2 { grid-template-columns: 32px 28px 25px 18px 10px 28px 18px 9px 28px 21px 29px 8px; padding-left: 18px; color: #555; font-size: 15px; }
.font .r2 i { font-family: "Liberation Serif", serif; font-size: 17px; font-weight: 700; }
.font .r2 u { font-weight: 600; text-underline-offset: 2px; }
.align .body { display: grid; grid-template-columns: 171px 1fr; }
.alignl .r1 { grid-template-columns: 30px 25px 32px 9px 26px 8px; padding-left: 15px; }
.sel { width: 28px; height: 29px; padding-left: 4px; border: 1px solid #888; background: #c6c6c6; }
.alignl .r3 { grid-template-columns: 30px 30px 26px 10px 30px 18px; padding-left: 16px; }
.alignr { background: linear-gradient(#d0d0d0, #d0d0d0) 0 12px / 1px 69px no-repeat; }
.alignr .rw { grid-template-columns: 21px 1fr; padding-left: 12px; }
.alignr .rm { grid-template-columns: 24px 112px 22px; padding-left: 9px; }
.orient { overflow: visible; }
.ab { font: 600 11px "Open Sans", sans-serif; fill: #666; }
.ic { font: 600 11px "Open Sans", sans-serif; fill: #555; }
.dec { font: 600 10px "Open Sans", sans-serif; fill: #666; }
.number .r1 { padding-left: 10px; }
.number .combo { width: 174px; }
.number .r2 { grid-template-columns: 29px 22px 34px 22px 11px 30px 17px; padding-left: 14px; color: #555; }
.pct { font-size: 17px; }
.comma { font: 700 22px/10px "Liberation Serif", serif; margin-top: -12px; }
.font .r2 svg, .number .r2 svg[width="8"], .align svg[width="8"] { color: #333; }
.styles .body { display: grid; grid-template-columns: 88px 74px 53px; padding-left: 11px; }
.styles .big > svg { margin-left: 6px; }
.styles .big:last-child > svg { margin-left: 4px; }
.cells .body { display: grid; grid-template-columns: 52px 52px 51px; padding-left: 10px; }
.edit .body { display: grid; grid-template-columns: 112px 52px 58px; padding-left: 15px; }
.edit .big > svg { margin-left: 2px; }
.collapse { margin: 102px 0 0 120px; }

/* Formula bar */
.formula { display: flex; align-items: center; height: 54px; padding: 0 6px 1px; background: #e6e6e6; }
.box { display: flex; align-items: center; height: 30px; border: 1px solid #c3c3c3; background: #fdfdfd; }
.name { width: 127px; justify-content: space-between; padding: 0 8px 0 6px; font-size: 14.5px; color: #444; }
.dots { margin: 0 17px 0 17px; }
.fx { width: 137px; margin-right: 3px; padding-left: 14px; gap: 29px; }
.fx span { font: italic 700 15px "Liberation Serif", serif; color: #666; margin-left: -1px; }
.fx span i { font-size: 21px; }
.input { width: 1604px; justify-content: flex-end; padding-right: 4px; }

/* Worksheet canvas: objects float over the cell grid */
.work { display: flex; height: 715px; }
.sheet { position: relative; width: 1894px; border: 1px solid #919191; background: #fff; color: #000; font: 16.2px/23px Lato, sans-serif; }
.pivot { width: 288px; margin-top: 46px; border-collapse: collapse; table-layout: fixed; }
.pivot td, .pivot th { height: 24px; padding: 0 4px 0 2px; line-height: 23px; text-align: right; }
.pivot th { padding-top: 1px; line-height: 22px; text-align: left; background: #ddebf7; border-bottom: 1px solid #9bc2e6; }
.pivot th:first-child { width: 168px; padding-right: 2px; }
.pivot td:first-child { text-align: left; }
.pivot .total td { height: 25px; background: #ddebf7; border-top: 1px solid #9bc2e6; font-weight: 700; }
.filter { float: right; display: grid; place-items: center; width: 21px; height: 21px; border: 1px solid #a5adb8; background: linear-gradient(#fff, #eef0f5); }
.chart { position: absolute; left: 546px; top: 50px; }
.chart text { font-family: Lato, sans-serif; }
.chart .btn { font: 12.5px "Noto Sans", sans-serif; fill: #000; }
.chart .title { font-size: 20.5px; fill: #595959; }
.vals { font-size: 13.5px; fill: #404040; }
.legend { font-size: 13.5px; fill: #595959; }
.dash { position: absolute; left: 679px; top: 446px; width: 254px; height: 35px; overflow: hidden; color: #c00000; font-size: 41px; font-weight: 700; line-height: 46px; }
.back { position: absolute; left: 7px; top: 452px; }
.next { position: absolute; left: 1497px; top: 455px; }
.cell { position: absolute; left: 1246px; top: 237px; width: 83px; height: 27px; border: 2px solid #217346; }
.cell::after { content: ""; position: absolute; right: -4px; bottom: -4px; width: 6px; height: 6px; border: 1px solid #fff; border-width: 1px 0 0 1px; background: #217346; }
.vbar { display: flex; flex-direction: column; width: 20px; margin: 2px 0 0 3px; }
.vbar span { border: 1px solid #919191; background: #fff; }
.btn-up, .btn-down { display: grid; place-items: center; height: 19px; }
.vbar .thumb { height: 652px; margin-top: -1px; }
.btn-down { margin-top: 24px; }

/* Sheet tabs */
.sheets { display: grid; align-items: center; height: 29px; padding: 0 0 0 27px; border-bottom: 1px solid #c3c3c3; grid-template-columns: 30px 24px 23px 142px 116px 139px 202px 121px 166px 174px 95px 148px 106px 188px 17px 1fr; font-size: 16px; color: #444; }
.more { height: 21px; border-right: 1px solid #a0a0a0; color: #136b3b; font-weight: 700; line-height: 12px; }
.tab { height: 21px; padding-right: 1px; line-height: 12px; text-align: center; border-right: 1px solid #a0a0a0; }
.tab.last { padding-right: 7px; border: 0; }
.tab.end { padding: 0; }
.tab.cur { height: 26px; align-self: start; margin-top: -1px; padding: 0; border: 0 solid #919191; border-right-width: 1px; border-bottom: 2px solid #217346; background: #fff; color: #217346; font-weight: 700; line-height: 23px; }
.plus { margin-left: 32px; }
.hbar { display: flex; align-items: center; }
.hb { display: grid; place-items: center; width: 19px; height: 19px; border: 1px solid #919191; background: #fff; }
.hthumb { width: 131px; height: 19px; margin: 0 7px 0 0; border: 1px solid #919191; border-left: 0; background: #fff; }

/* Status bar */
.status { display: grid; align-items: center; height: 26px; padding-left: 9px; grid-template-columns: 61px 22px 1456px 50px 50px 57px 146px 27px 1fr; background: #f3f3f3; font-size: 12.3px; line-height: 22px; color: #333; }
.status > span:not(.view) { padding-top: 1px; }
.view { display: grid; place-items: center; height: 26px; }
.view.on { background: #c6c6c6; }
.view.layout { width: 49px; }

/* Taskbar */
.taskbar { display: grid; align-items: center; height: 60px; padding: 0 0 1px 25px; border-top: 1px solid #333; background: #171717; color: #ddd; grid-template-columns: 39px 383px 46px 277px 786px 37px 44px 51px 30px 30px 40px 89px 1fr; font-size: 14.3px; }
.two-line { display: flex; flex-direction: column; line-height: 20px; padding-bottom: 1px; }
.faint { color: #aaa; }
.mid { align-items: center; width: 29px; }
.clock { align-items: flex-end; width: 78px; }
.search { display: flex; align-items: center; width: 275px; height: 40px; padding-left: 14px; gap: 11px; border: 1px solid #444; border-radius: 20px; background: #2f2f2f; color: #aaa; font-size: 16px; }
.art { margin-left: 37px; }
.apps { display: grid; grid-template-columns: repeat(13, 55px); align-items: center; }
.apps > span { position: relative; display: grid; place-items: center; height: 50px; }
.run::after, .xl::after { content: ""; position: absolute; bottom: 1px; left: 24px; width: 8px; height: 4px; border-radius: 2px; background: #888; }
.xl::before { content: ""; position: absolute; left: 3px; width: 50px; height: 50px; border: 1px solid #2b2b2b; border-radius: 5px; background: #222; }
.xl svg { position: relative; }
.xl::after { left: 18px; width: 20px; background: #3e97d1; }
.wa em { position: absolute; left: 28px; top: 4px; width: 20px; height: 20px; border-radius: 50%; background: #3a95c8; color: #111; font: 12.5px/20px "Open Sans", sans-serif; text-align: center; }
.zm { font: 600 9px "Open Sans", sans-serif; fill: #fff; }
.x { font: 700 11px "Open Sans", sans-serif; fill: #fff; }
```
FILE: fit.js
```js
// Tracks each label so that it occupies its nominal width whatever font is available.
document.querySelectorAll('[data-w]').forEach(function (el) {
  var want = Number(el.dataset.w);
  var natural = el.getBoundingClientRect().width;
  el.style.letterSpacing = ((want - natural) / el.textContent.length) + 'px';
});
```
